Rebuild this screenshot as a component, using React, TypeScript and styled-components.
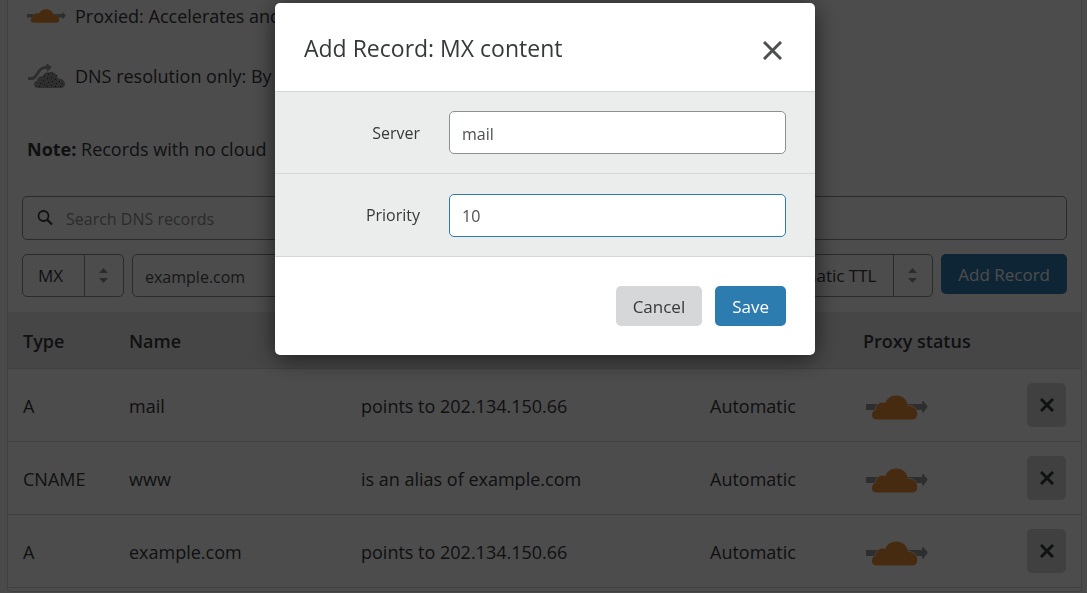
import React from "react";
import styled, { createGlobalStyle, css } from "styled-components";

const font = '"Open Sans", "Noto Sans", "Liberation Sans", sans-serif';

const GlobalStyle = createGlobalStyle`
  * { box-sizing: border-box; }
  body {
    margin: 0;
    background: #f7f7f8;
    color: #36393a;
    font: 400 18px/24px ${font};
    overflow: hidden;
  }
  button, input, select { font-family: inherit; margin: 0; }
`;

const Page = styled.div`
  padding: 0 5px 0 7px;
`;

const Panel = styled.main`
  background: #fff;
  border: 1px solid #d5d7d8;
  border-top: 0;
  border-radius: 0 0 4px 4px;
  padding-bottom: 3px;
`;

const Legend = styled.ul`
  list-style: none;
  margin: 0;
  padding: 4px 20px 0 19px;
  display: flex;
  flex-direction: column;
  gap: 36px;
`;

const LegendItem = styled.li`
  display: grid;
  grid-template-columns: 39px 1fr;
  column-gap: 9px;
  align-items: center;
  height: 24px;
`;

const Note = styled.p`
  margin: 0;
  padding: 49px 20px 35px 19px;
`;

const Controls = styled.div`
  display: flex;
  flex-direction: column;
  gap: 14px;
  padding: 0 14px 15px;
`;

const fieldBorder = css`
  border: 1px solid #8d9092;
  border-radius: 5px;
  background: #fff;
`;

const SearchBox = styled.label`
  ${fieldBorder}
  display: flex;
  align-items: center;
  gap: 12px;
  height: 44px;
  padding: 0 14px;
`;

const SearchInput = styled.input`
  flex: 1;
  border: 0;
  outline: 0;
  padding: 2px 0 0;
  background: transparent;
  font-size: 16px;
  color: inherit;
  &::placeholder { color: #8d9092; opacity: 1; }
`;

const RecordForm = styled.div`
  display: flex;
  align-items: flex-start;
  gap: 8px;
`;

const TextField = styled.input<{ $active?: boolean }>`
  ${fieldBorder}
  border-color: ${(p) => (p.$active ? "#2c7cb0" : "#8d9092")};
  flex: 1;
  min-width: 0;
  height: 43px;
  padding: 2px 12px 0;
  font-size: 16px;
  color: #4d4f50;
  outline: 0;
`;

const SelectBox = styled.span<{ $width: number }>`
  ${fieldBorder}
  display: grid;
  grid-template-columns: 1fr 39px;
  width: ${(p) => p.$width}px;
  height: 43px;
  overflow: hidden;
`;

const Select = styled.select`
  grid-area: 1 / 1 / 2 / 3;
  appearance: none;
  border: 0;
  outline: 0;
  background: transparent;
  padding: 0 0 0 15px;
  font-size: 17px;
  color: #36393a;
`;

const SelectHandle = styled.span`
  grid-area: 1 / 2 / 2 / 3;
  display: grid;
  place-items: center;
  padding-right: 2px;
  border-left: 1px solid #8d9092;
  pointer-events: none;
`;

const Button = styled.button<{ $primary?: boolean }>`
  height: 40px;
  padding: 2px 17px 0;
  border: 0;
  border-radius: 5px;
  font-size: 17px;
  line-height: 24px;
  white-space: nowrap;
  background: ${(p) => (p.$primary ? "#2c7cb0" : "#d5d7d8")};
  color: ${(p) => (p.$primary ? "#fff" : "#36393a")};
`;

const Table = styled.table`
  width: 100%;
  table-layout: fixed;
  border-collapse: collapse;
  th, td {
    text-align: left;
    padding: 2px 0 0 15px;
    border-bottom: 1px solid #d5d7d8;
  }
  th {
    height: 56px;
    font-weight: 600;
    background: #ebebeb;
  }
  td { height: 73px; }
  td:last-child { padding-top: 0; }
  td svg { display: block; margin: 4px 0 0 3px; }
`;

const Col = styled.col<{ $width?: number }>`
  width: ${(p) => (p.$width ? `${p.$width}px` : "auto")};
`;

const DeleteButton = styled.button`
  display: grid;
  place-items: center;
  width: 39px;
  height: 44px;
  padding: 0;
  border: 0;
  border-radius: 5px;
  background: #d5d7d8;
  && svg { margin: 0; }
`;

const Backdrop = styled.div`
  position: fixed;
  inset: 0;
  display: flex;
  justify-content: center;
  align-items: flex-start;
  padding: 3px 4px 0 7px;
  background: rgba(0, 0, 0, 0.7);
`;

const Dialog = styled.section`
  width: 540px;
  max-width: 100%;
  background: #fff;
  border-radius: 5px;
  box-shadow: 0 4px 25px rgba(0, 0, 0, 0.6);
`;

const DialogHeader = styled.header`
  display: flex;
  align-items: center;
  justify-content: space-between;
  height: 88px;
  padding: 6px 33px 0 29px;
`;

const DialogTitle = styled.h2`
  margin: 0;
  padding-bottom: 4px;
  font-size: 23px;
  line-height: 32px;
  font-weight: 400;
`;

const CloseButton = styled.button`
  display: block;
  padding: 0;
  border: 0;
  background: none;
  svg { display: block; }
`;

const DialogBody = styled.div`
  border: solid #d5d7d8;
  border-width: 1px 0;
  background: #ebeded;
`;

const FieldRow = styled.label`
  display: grid;
  grid-template-columns: 145px 1fr;
  column-gap: 29px;
  align-items: center;
  height: 82px;
  padding-right: 29px;
  font-size: 16px;
  &:first-child { border-bottom: 1px solid #d5d7d8; }
`;

const FieldName = styled.span`
  text-align: right;
`;

const DialogFooter = styled.footer`
  display: flex;
  justify-content: flex-end;
  gap: 13px;
  padding: 29px;
`;

function ProxiedCloud({ width, height }: { width: number; height: number }) {
  return (
    <svg width={width} height={height} viewBox="0 0 62 25" preserveAspectRatio="none" aria-label="Proxied" role="img">
      <path d="M0 9h56V6.3h1.5l4.3 5.2-4.3 6H56V15H0z" fill="#999b9e" />
      <path
        d="M10 24.4c-3 0-4-2.400-4-4.400 0-2.800 1.400-4.700 3.800-5.200.1-4 2.700-7.300 6.700-7.300 1.200 0 2 .2 2.900.6C20.700 3.600 24.700.4 30.200.4c6.700 0 11 4.300 12 10.600 5-.7 9 2.600 9 7.600 0 3.400-1.200 5.800-4 5.800z"
        fill="#eb9038"
        stroke="#fff"
        strokeWidth="1.200"
        paintOrder="stroke"
      />
    </svg>
  );
}

function BypassCloud() {
  const dots = [
    [17, 13], [21, 11], [25, 10], [29, 12], [16, 17], [20, 15], [24, 14], [28, 16],
    [13, 20], [17, 21], [21, 19], [25, 18], [29, 20], [32, 18], [35, 20], [12, 23],
    [20, 23], [24, 22], [28, 23], [33, 23],
  ];
  return (
    <svg width="39" height="24" viewBox="0 1 39 24" aria-label="DNS only" role="img">
      <path d="M1 15.500h4c5 0 6-11 13-11h3" fill="none" stroke="#999b9e" strokeWidth="3" />
      <path d="M19 0l6 4-5 5z" fill="#999b9e" />
      <path
        d="M11 25c-3 0-4-1.800-4-3.600 0-2 1.200-3.400 3-3.700.2-3 2.300-4.700 5.400-4.400C16.500 10.400 19.300 9 23 9c4.500 0 7.300 2.700 8 6.800 3.900-.5 7 1.700 7 5 0 2.500-1.500 4.200-4 4.200z"
        fill="#999b9e"
      />
      {dots.map(([x, y]) => (
        <rect key={`${x}-${y}`} x={x} y={y} width="1" height="1" fill="#333" />
      ))}
    </svg>
  );
}

function Cross({ size, weight, color }: { size: number; weight: number; color: string }) {
  return (
    <svg width={size} height={size} viewBox={`0 0 ${size} ${size}`} aria-hidden="true">
      <path d={`M1 1L${size - 1} ${size - 1}M${size - 1} 1L1 ${size - 1}`} stroke={color} strokeWidth={weight} />
    </svg>
  );
}

function Arrows() {
  return (
    <svg width="9" height="15" viewBox="0 0 9 15" aria-hidden="true">
      <path d="M0 5l4.500-5L9 5zM0 10h9l-4.500 5z" fill="#8d9092" />
    </svg>
  );
}

const records = [
  { type: "A", name: "mail", content: "points to 202.134.150.66", ttl: "Automatic" },
  { type: "CNAME", name: "www", content: "is an alias of example.com", ttl: "Automatic" },
  { type: "A", name: "example.com", content: "points to 202.134.150.66", ttl: "Automatic" },
];

export default function App() {
  return (
    <>
      <GlobalStyle />
      <Page>
        <Panel>
          <Legend>
            <LegendItem>
              <ProxiedCloud width={39} height={14} />
              <span>Proxied: Accelerates and</span>
            </LegendItem>
            <LegendItem>
              <BypassCloud />
              <span>DNS resolution only: By</span>
            </LegendItem>
          </Legend>
          <Note>
            <strong>Note:</strong> Records with no cloud
          </Note>
          <Controls>
            <SearchBox>
              <svg width="17" height="17" viewBox="0 0 17 17" aria-hidden="true">
                <circle cx="6.500" cy="6" r="5" fill="none" stroke="#36393a" strokeWidth="1.800" />
                <path d="M10 9.500l5 5" stroke="#36393a" strokeWidth="2.200" />
              </svg>
              <SearchInput type="search" placeholder="Search DNS records" aria-label="Search DNS records" />
            </SearchBox>
            <RecordForm>
              <SelectBox $width={102}>
                <Select aria-label="Record type" defaultValue="MX">
                  <option>MX</option>
                </Select>
                <SelectHandle><Arrows /></SelectHandle>
              </SelectBox>
              <TextField aria-label="Name" defaultValue="example.com" />
              <SelectBox $width={186}>
                <Select aria-label="TTL" defaultValue="Automatic TTL">
                  <option>Automatic TTL</option>
                </Select>
                <SelectHandle><Arrows /></SelectHandle>
              </SelectBox>
              <Button type="button" $primary>Add Record</Button>
            </RecordForm>
          </Controls>
          <Table>
            <colgroup>
              <Col $width={106} />
              <Col $width={232} />
              <Col />
              <Col $width={153} />
              <Col $width={164} />
              <Col $width={69} />
            </colgroup>
            <thead>
              <tr>
                <th>Type</th>
                <th>Name</th>
                <th />
                <th />
                <th>Proxy status</th>
                <th />
              </tr>
            </thead>
            <tbody>
              {records.map((r) => (
                <tr key={r.name}>
                  <td>{r.type}</td>
                  <td>{r.name}</td>
                  <td>{r.content}</td>
                  <td>{r.ttl}</td>
                  <td><ProxiedCloud width={62} height={25} /></td>
                  <td>
                    <DeleteButton type="button" aria-label={`Delete ${r.name}`}>
                      <Cross size={14} weight={3} color="#36393a" />
                    </DeleteButton>
                  </td>
                </tr>
              ))}
            </tbody>
          </Table>
        </Panel>
      </Page>
      <Backdrop>
        <Dialog role="dialog" aria-modal="true" aria-labelledby="dialog-title">
          <DialogHeader>
            <DialogTitle id="dialog-title">Add Record: MX content</DialogTitle>
            <CloseButton type="button" aria-label="Close">
              <Cross size={19} weight={3} color="#4d4f50" />
            </CloseButton>
          </DialogHeader>
          <DialogBody>
            <FieldRow>
              <FieldName>Server</FieldName>
              <TextField defaultValue="mail" />
            </FieldRow>
            <FieldRow>
              <FieldName>Priority</FieldName>
              <TextField defaultValue="10" $active />
            </FieldRow>
          </DialogBody>
          <DialogFooter>
            <Button type="button">Cancel</Button>
            <Button type="button" $primary>Save</Button>
          </DialogFooter>
        </Dialog>
      </Backdrop>
    </>
  );
}
